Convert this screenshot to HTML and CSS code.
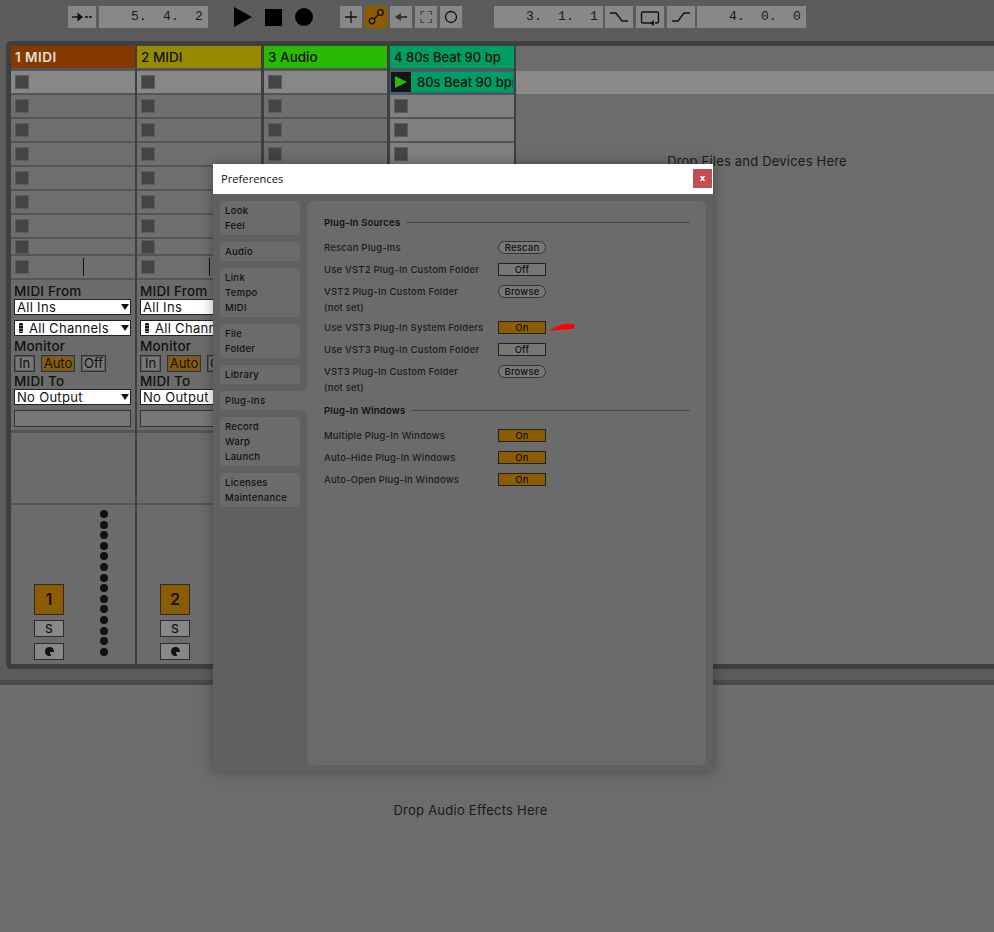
FILE: index.html
```html
<!DOCTYPE html>
<html lang="en">
<head>
  <meta charset="UTF-8" />
  <title>Preferences</title>
  <link rel="stylesheet" href="styles.css">
</head>
<body>
  <div class="toolbar">
    <div class="tool tool-tap">
      <svg width="28" height="22" viewBox="0 0 28 22"><path d="M4 11h7" stroke="#111" stroke-width="1.400"/><path d="M9.500 6.500L15 11l-5.500 4.500z" fill="#111"/><path d="M17 11h7" stroke="#111" stroke-width="1.400" stroke-dasharray="3 1"/></svg>
    </div>
    <div class="field field-first">5.  4.  2</div>
    <svg class="play" width="18" height="20" viewBox="0 0 18 20"><path d="M0 0l18 10L0 20z" fill="#000"/></svg>
    <div class="stop"></div>
    <div class="rec"></div>
    <div class="tool tool-plus">
      <svg width="22" height="22" viewBox="0 0 22 22"><path d="M11 5v12M5 11h12" stroke="#111" stroke-width="1.300"/></svg>
    </div>
    <div class="tool on">
      <svg width="22" height="22" viewBox="0 0 22 22"><circle cx="7" cy="15" r="2.800" fill="none" stroke="#111" stroke-width="1.300"/><circle cx="15.500" cy="6.500" r="2.800" fill="none" stroke="#111" stroke-width="1.300"/><path d="M9 13l4.500-4.500" stroke="#111" stroke-width="1.300"/></svg>
    </div>
    <div class="tool">
      <svg width="22" height="22" viewBox="0 0 22 22"><path d="M5 11l6-4v3h6v2h-6v3z" fill="#333"/></svg>
    </div>
    <div class="tool">
      <svg width="22" height="22" viewBox="0 0 22 22"><path d="M6 9V5.500h3.500M13 5.500h3.500V9M16.500 13v3.500H13M9.500 16.500H6V13" fill="none" stroke="#444" stroke-width="1.200"/></svg>
    </div>
    <div class="tool">
      <svg width="22" height="22" viewBox="0 0 22 22"><circle cx="11" cy="11" r="5.500" fill="none" stroke="#111" stroke-width="1.300"/></svg>
    </div>
    <div class="field field-second">3.  1.  1</div>
    <div class="tool tool-wide">
      <svg width="28" height="22" viewBox="0 0 28 22"><path d="M5 7h6l6 8h6" fill="none" stroke="#111" stroke-width="1.300"/></svg>
    </div>
    <div class="tool tool-wide">
      <svg width="28" height="22" viewBox="0 0 28 22"><path d="M15 17H7q-1.500 0-1.500-1.500v-8Q5.500 6 7 6h14q1.500 0 1.500 1.500v8Q22.500 17 21 17h-2" fill="none" stroke="#111" stroke-width="1.400"/><path d="M18 14v6l-4-3z" fill="#111"/></svg>
    </div>
    <div class="tool tool-wide">
      <svg width="28" height="22" viewBox="0 0 28 22"><path d="M5 15h6l6-8h6" fill="none" stroke="#111" stroke-width="1.300"/></svg>
    </div>
    <div class="field field-last">4.  0.  0</div>
  </div>

  <div class="session">
    <div class="track">
      <div class="track-head head-rust">1 MIDI</div>
      <div class="slot first"><span class="square"></span></div>
      <div class="slot"><span class="square"></span></div>
      <div class="slot"><span class="square"></span></div>
      <div class="slot"><span class="square"></span></div>
      <div class="slot"><span class="square"></span></div>
      <div class="slot"><span class="square"></span></div>
      <div class="slot"><span class="square"></span></div>
      <div class="slot short"><span class="square"></span></div>
      <div class="slot stop-row"><span class="square"></span><span class="tick"></span></div>
      <div class="routing">
        <div class="route-label">MIDI From</div>
        <div class="select">All Ins</div>
        <div class="select select-ch"><span class="ch-icon"></span>All Channels</div>
        <div class="route-label label-mon">Monitor</div>
        <div class="monitor">
          <span class="mon mon-in">In</span>
          <span class="mon mon-auto">Auto</span>
          <span class="mon mon-off">Off</span>
        </div>
        <div class="route-label label-to">MIDI To</div>
        <div class="select">No Output</div>
        <div class="empty-box"></div>
      </div>
      <div class="sends"></div>
      <div class="mixer">
        <div class="mixer-btns">
          <div class="num">1</div>
          <div class="solo">S</div>
          <div class="solo phones"><span class="phones-icon"></span></div>
        </div>
        <div class="meter"><i></i><i></i><i></i><i></i><i></i><i></i><i></i><i></i><i></i><i></i><i></i><i></i><i></i><i></i></div>
      </div>
    </div>

    <div class="track">
      <div class="track-head head-yellow">2 MIDI</div>
      <div class="slot first"><span class="square"></span></div>
      <div class="slot"><span class="square"></span></div>
      <div class="slot"><span class="square"></span></div>
      <div class="slot"><span class="square"></span></div>
      <div class="slot"><span class="square"></span></div>
      <div class="slot"><span class="square"></span></div>
      <div class="slot"><span class="square"></span></div>
      <div class="slot short"><span class="square"></span></div>
      <div class="slot stop-row"><span class="square"></span><span class="tick"></span></div>
      <div class="routing">
        <div class="route-label">MIDI From</div>
        <div class="select">All Ins</div>
        <div class="select select-ch"><span class="ch-icon"></span>All Channels</div>
        <div class="route-label label-mon">Monitor</div>
        <div class="monitor">
          <span class="mon mon-in">In</span>
          <span class="mon mon-auto">Auto</span>
          <span class="mon mon-off">Off</span>
        </div>
        <div class="route-label label-to">MIDI To</div>
        <div class="select">No Output</div>
        <div class="empty-box"></div>
      </div>
      <div class="sends"></div>
      <div class="mixer">
        <div class="mixer-btns">
          <div class="num">2</div>
          <div class="solo">S</div>
          <div class="solo phones"><span class="phones-icon"></span></div>
        </div>
      </div>
    </div>

    <div class="track track-3">
      <div class="track-head head-green">3 Audio</div>
      <div class="slot first"><span class="square"></span></div>
      <div class="slot"><span class="square"></span></div>
      <div class="slot"><span class="square"></span></div>
      <div class="slot"><span class="square"></span></div>
    </div>

    <div class="track track-4">
      <div class="track-head head-teal">4 80s Beat 90 bp</div>
      <div class="slot clip">
        <span class="clip-play"><span class="clip-arrow"></span></span>
        <span class="clip-name">80s Beat 90 bpm</span>
      </div>
      <div class="slot light"><span class="square"></span></div>
      <div class="slot light"><span class="square"></span></div>
      <div class="slot light"><span class="square"></span></div>
    </div>

    <div class="drop-area">
      <div class="drop-band"></div>
      <div class="drop-text">Drop Files and Devices Here</div>
    </div>
  </div>

  <div class="strip"></div>

  <div class="devices">
    <div class="devices-text">Drop Audio Effects Here</div>
  </div>

  <div class="dialog">
    <div class="dialog-title">
      <span class="dialog-name">Preferences</span>
      <span class="close">x</span>
    </div>
    <div class="dialog-body">
      <div class="sidebar">
        <div class="tab">Look<br>Feel</div>
        <div class="tab">Audio</div>
        <div class="tab">Link<br>Tempo<br>MIDI</div>
        <div class="tab">File<br>Folder</div>
        <div class="tab">Library</div>
        <div class="tab tab-active">Plug-Ins</div>
        <div class="tab">Record<br>Warp<br>Launch</div>
        <div class="tab">Licenses<br>Maintenance</div>
      </div>
      <div class="content">
        <div class="section-title"><span>Plug-In Sources</span></div>
        <div class="pref"><span class="pref-name">Rescan Plug-Ins</span><span class="btn btn-round">Rescan</span></div>
        <div class="pref"><span class="pref-name">Use VST2 Plug-In Custom Folder</span><span class="btn">Off</span></div>
        <div class="pref pref-tall"><span class="pref-name">VST2 Plug-In Custom Folder<br>(not set)</span><span class="btn btn-round">Browse</span></div>
        <div class="pref"><span class="pref-name">Use VST3 Plug-In System Folders</span><span class="btn btn-on">On</span>
          <svg class="scribble" width="25" height="8" viewBox="0 0 25 8"><path d="M0 7C4 5.500 8 2.500 12 1.500 16 .5 21 .5 24 1V6C17 6 6 7.500 0 7.500z" fill="#f00"/></svg>
        </div>
        <div class="pref"><span class="pref-name">Use VST3 Plug-In Custom Folder</span><span class="btn">Off</span></div>
        <div class="pref pref-tall"><span class="pref-name">VST3 Plug-In Custom Folder<br>(not set)</span><span class="btn btn-round">Browse</span></div>
        <div class="section-title section-second"><span>Plug-In Windows</span></div>
        <div class="pref"><span class="pref-name">Multiple Plug-In Windows</span><span class="btn btn-on">On</span></div>
        <div class="pref"><span class="pref-name">Auto-Hide Plug-In Windows</span><span class="btn btn-on">On</span></div>
        <div class="pref"><span class="pref-name">Auto-Open Plug-In Windows</span><span class="btn btn-on">On</span></div>
      </div>
    </div>
  </div>
</body>
</html>
```

FILE: styles.css
```css
* {
  box-sizing: border-box;
}
html, body {
  margin: 0;
  height: 932px;
  overflow: hidden;
}
body {
  display: flex;
  flex-direction: column;
  background-color: #5c5c5c;
  font-family: Inter, "Noto Sans", sans-serif;
  color: #111;
}

/* transport */
.toolbar {
  display: flex;
  align-items: center;
  height: 41px;
  flex: none;
  padding: 6px 0 13px 68px;
}
.tool {
  display: flex;
  align-items: center;
  justify-content: center;
  width: 22px;
  height: 22px;
  margin-right: 3px;
  background-color: #888;
}
.tool-tap, .tool-wide {
  width: 28px;
}
.tool-plus {
  margin-left: 27px;
}
.tool.on {
  background-color: #8c5d00;
}
.field {
  width: 109px;
  height: 22px;
  padding-right: 5px;
  background-color: #888;
  font-family: "Liberation Mono", monospace;
  font-size: 13px;
  line-height: 22px;
  letter-spacing: 0.2px;
  text-align: right;
  white-space: pre;
  color: #1a1a1a;
}
.field-second {
  margin-left: 29px;
  margin-right: 2px;
}
.field-last {
  margin-left: -1px;
}
.play {
  margin-left: 26px;
}
.stop {
  width: 17px;
  height: 17px;
  margin-left: 13px;
  background-color: #000;
}
.rec {
  width: 18px;
  height: 18px;
  margin-left: 13px;
  border-radius: 50%;
  background-color: #000;
}

/* session view */
.session {
  display: flex;
  flex: none;
  height: 628px;
  margin-left: 6px;
  padding: 5px 0 5px 5px;
  background-color: #3f3f3f;
  border-radius: 5px 0 0 5px;
}
.track {
  display: flex;
  flex-direction: column;
  width: 124px;
  margin-right: 2px;
  background-color: #555;
}
.track-3 {
  width: 123px;
  margin-left: 1px;
  margin-right: 3px;
}
.track-head {
  flex: none;
  height: 22px;
  margin-bottom: 3px;
  padding-left: 4px;
  font-size: 13.5px;
  font-weight: 500;
  line-height: 22px;
  white-space: nowrap;
  overflow: hidden;
}
.head-rust {
  background-color: #823a00;
  color: #e8e0d8;
  font-weight: 600;
  letter-spacing: 0.5px;
}
.head-yellow {
  background-color: #988a00;
}
.head-green {
  background-color: #29bb00;
}
.head-teal {
  background-color: #009e60;
  font-size: 13px;
}
.slot {
  display: flex;
  align-items: center;
  flex: none;
  height: 22px;
  margin-bottom: 2px;
  padding-left: 5px;
  background-color: #6f6f6f;
}
.slot.first {
  background-color: #878787;
}
.slot.light {
  background-color: #808080;
}
.slot.short {
  height: 15px;
}
.square {
  width: 12px;
  height: 12px;
  background-color: #444;
  box-shadow: 0 0 0 1px #5c5c5c;
}
.tick {
  width: 1px;
  height: 18px;
  margin-left: 55px;
  background-color: #111;
}
.clip {
  padding-left: 0;
  border: 1px solid #1f6f8f;
  background-color: #009e60;
  overflow: hidden;
}
.clip-play {
  display: flex;
  align-items: center;
  justify-content: center;
  flex: none;
  width: 20px;
  height: 20px;
  background-color: #141414;
}
.clip-arrow {
  width: 0;
  height: 0;
  border-left: 12px solid #29bb00;
  border-top: 6.5px solid transparent;
  border-bottom: 6.5px solid transparent;
}
.clip-name {
  margin-left: 6px;
  font-size: 13px;
  font-weight: 500;
  white-space: nowrap;
}
.routing {
  flex: none;
  height: 150px;
  padding: 3px 3px 0;
  background-color: #6b6b6b;
}
.route-label {
  font-size: 13.5px;
  font-weight: 500;
  line-height: 16px;
  letter-spacing: 0.2px;
  white-space: nowrap;
}
.label-mon {
  margin-top: 2px;
}
.label-to {
  margin-top: 1px;
}
.select {
  position: relative;
  width: 117px;
  height: 16px;
  margin-bottom: 5px;
  padding-left: 2px;
  border: 1px solid #222;
  background-color: #fff;
  font-size: 13px;
  line-height: 14px;
  letter-spacing: 0.3px;
  white-space: nowrap;
}
.select::after {
  content: "";
  position: absolute;
  right: 1px;
  top: 4px;
  border-top: 6px solid #111;
  border-left: 4.5px solid transparent;
  border-right: 4.5px solid transparent;
}
.select-ch {
  margin-bottom: 2px;
  padding-left: 14px;
}
.ch-icon {
  position: absolute;
  left: 4px;
  top: 2px;
  width: 4px;
  height: 10px;
  background: repeating-linear-gradient(#111 0 2px, #777 2px 3px);
  border-radius: 1px;
}
.monitor {
  display: flex;
  height: 17px;
  margin-top: 1px;
}
.mon {
  height: 17px;
  border: 1px solid #333;
  outline: 1px solid #5a5a5a;
  outline-offset: -2px;
  font-size: 13px;
  line-height: 15px;
  text-align: center;
}
.mon-in {
  width: 21px;
  background-color: #777;
}
.mon-auto {
  width: 34px;
  margin-left: 6px;
  background-color: #8c5d00;
}
.mon-off {
  width: 25px;
  margin-left: 6px;
  background-color: #777;
}
.empty-box {
  width: 117px;
  height: 17px;
  border: 1px solid #333;
  background-color: #777;
}
.sends {
  flex: none;
  height: 70px;
  margin-top: 3px;
  background-color: #6b6b6b;
}
.mixer {
  display: flex;
  flex: 1;
  margin-top: 2px;
  padding-left: 23px;
  background-color: #6b6b6b;
}
.mixer-btns {
  width: 30px;
  padding-top: 79px;
}
.num {
  height: 31px;
  border: 1px solid #2c2c2c;
  background-color: #8c5d00;
  font-size: 16px;
  font-weight: 600;
  line-height: 29px;
  text-align: center;
}
.solo {
  display: flex;
  align-items: center;
  justify-content: center;
  height: 17px;
  margin-top: 5px;
  border: 1px solid #2c2c2c;
  background-color: #888;
  font-size: 12px;
  font-weight: 500;
}
.phones {
  margin-top: 6px;
}
.phones-icon {
  width: 9px;
  height: 9px;
  border-radius: 50%;
  background: conic-gradient(#111 0 95deg, #888 95deg 160deg, #111 160deg 360deg);
}
.meter {
  display: flex;
  flex-direction: column;
  gap: 2.62px;
  margin-left: 36px;
  padding-top: 5px;
}
.meter i {
  display: block;
  width: 8px;
  height: 8px;
  border-radius: 50%;
  background-color: #111;
}
.drop-area {
  flex: 1;
  padding-top: 25px;
  background-color: #6c6c6c;
}
.drop-band {
  height: 23px;
  background-color: #8a8a8a;
}
.drop-text {
  margin-top: 59px;
  padding-left: 4px;
  font-size: 13px;
  line-height: 16px;
  letter-spacing: 0.2px;
  text-align: center;
  color: #1a1a1a;
}
.strip {
  flex: none;
  height: 11px;
}
.devices {
  flex: 1;
  padding-top: 117px;
  border-top: 5px solid #4a4a4a;
  background-color: #6c6c6c;
}
.devices-text {
  width: 941px;
  font-size: 13px;
  line-height: 16px;
  letter-spacing: 0.25px;
  text-align: center;
  color: #1a1a1a;
}

/* preferences window */
.dialog {
  position: absolute;
  left: 213px;
  top: 164px;
  width: 500px;
  height: 607px;
  background-color: #606060;
  box-shadow: 0 0 12px rgba(0, 0, 0, 0.35);
  font-size: 9.5px;
  font-weight: 500;
  letter-spacing: 0.3px;
}
.dialog-title {
  display: flex;
  align-items: center;
  justify-content: space-between;
  height: 30px;
  padding: 0 1px 0 8px;
  background-color: #fff;
  font-family: "Open Sans", sans-serif;
  font-size: 11.2px;
  font-weight: 400;
  letter-spacing: 0;
  color: #111;
}
.dialog-name {
  margin-bottom: 2px;
}
.close {
  width: 19px;
  height: 19px;
  margin-bottom: 1px;
  background-color: #c24e50;
  color: #fff;
  font-size: 9px;
  font-weight: 700;
  line-height: 18px;
  text-align: center;
}
.dialog-body {
  display: flex;
  padding: 7px;
}
.sidebar {
  display: flex;
  flex-direction: column;
  gap: 7px;
  width: 80px;
  margin-right: 7px;
}
.tab {
  position: relative;
  padding: 2px 5px;
  border-radius: 4px;
  background-color: #6b6b6b;
  line-height: 15px;
}
.tab-active {
  width: 87px;
  border-radius: 4px 0 0 4px;
}
.tab-active::before,
.tab-active::after {
  content: "";
  position: absolute;
  right: 0;
  width: 7px;
  height: 7px;
}
.tab-active::before {
  top: -7px;
  background: radial-gradient(circle at 0 0, transparent 7px, #6b6b6b 7.5px);
}
.tab-active::after {
  bottom: -7px;
  background: radial-gradient(circle at 0 100%, transparent 7px, #6b6b6b 7.5px);
}
.content {
  width: 399px;
  height: 564px;
  padding: 13px 16px 0 17px;
  border-radius: 6px;
  background-color: #6b6b6b;
  letter-spacing: 0.2px;
}
.section-title {
  display: flex;
  align-items: center;
  height: 16px;
  margin-bottom: 9px;
  font-weight: 600;
}
.section-title::after {
  content: "";
  flex: 1;
  height: 1px;
  margin-left: 6px;
  background-color: #4a4a4a;
}
.section-second {
  margin-top: 3px;
}
.pref {
  display: flex;
  align-items: flex-start;
  height: 22px;
}
.pref-tall {
  height: 36px;
}
.pref-name {
  width: 174px;
  padding-top: 1px;
  line-height: 16px;
  color: #1c1c1c;
}
.btn {
  width: 48px;
  height: 13px;
  margin-top: 2px;
  border: 1px solid #222;
  background-color: #777;
  line-height: 11px;
  text-align: center;
}
.btn-round {
  border-color: #333;
  border-radius: 7px;
}
.btn-on {
  background-color: #8c5d00;
}
.scribble {
  margin: 4px 0 0 4px;
}
```
